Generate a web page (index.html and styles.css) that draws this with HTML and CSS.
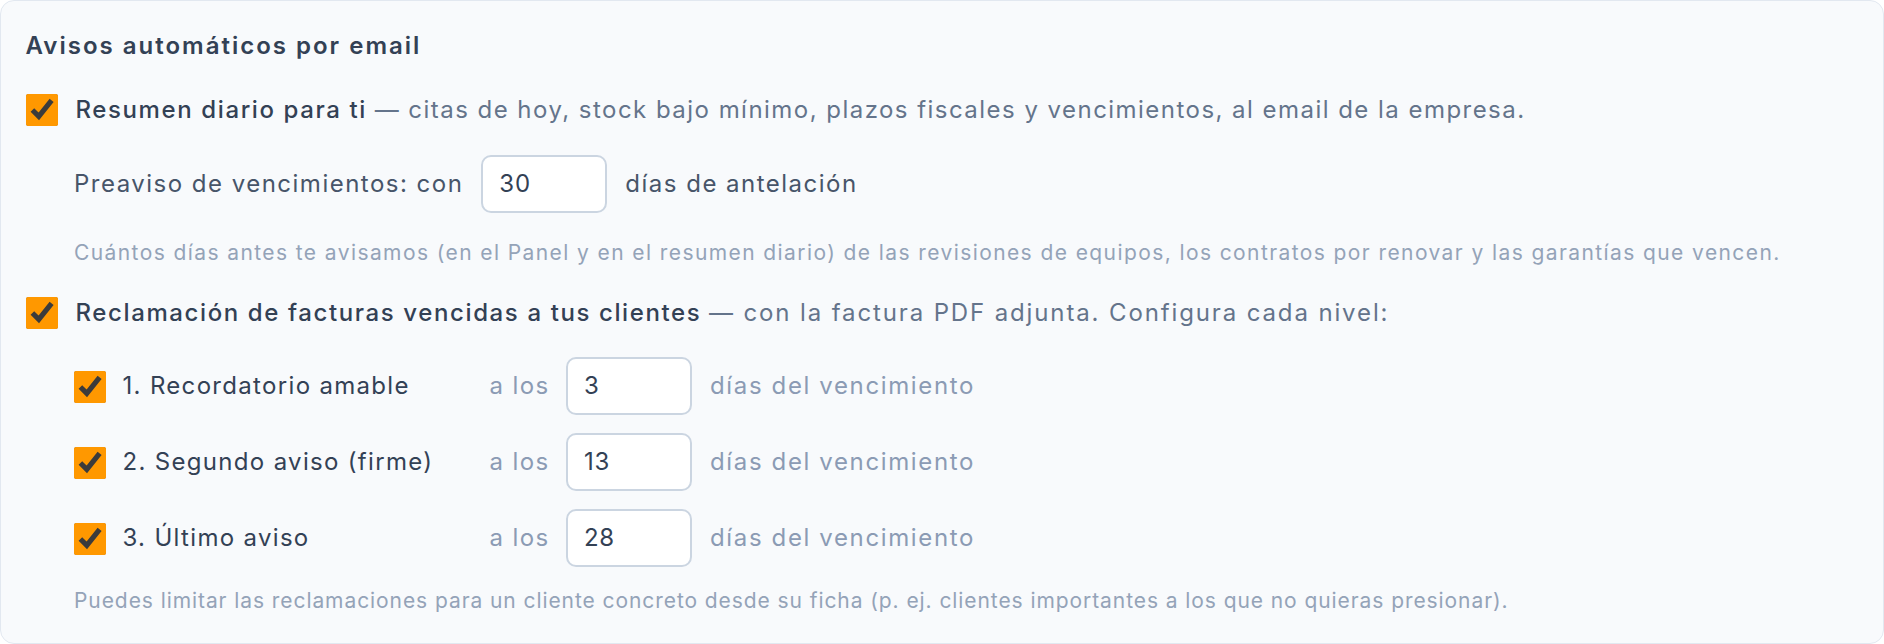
FILE: index.html
```html
<!DOCTYPE html>
<html lang="es">
<head>
<meta charset="utf-8">
<title>Avisos automáticos por email</title>
<link rel="stylesheet" href="styles.css">
</head>
<body>
<section class="card">
  <h2 class="title">Avisos automáticos por email</h2>

  <label class="check-row">
    <input type="checkbox" class="cb" checked>
    <span class="row-text"><span class="strong">Resumen diario para ti</span> <span class="desc">— citas de hoy, stock bajo mínimo, plazos fiscales y vencimientos, al email de la empresa.</span></span>
  </label>

  <div class="field-row">
    <span class="field-label">Preaviso de vencimientos: con</span>
    <input type="text" class="num" value="30">
    <span class="field-label">días de antelación</span>
  </div>

  <p class="help">Cuántos días antes te avisamos (en el Panel y en el resumen diario) de las revisiones de equipos, los contratos por renovar y las garantías que vencen.</p>

  <label class="check-row second">
    <input type="checkbox" class="cb" checked>
    <span class="row-text"><span class="strong">Reclamación de facturas vencidas a tus clientes</span> <span class="desc wide">— con la factura PDF adjunta. Configura cada nivel:</span></span>
  </label>

  <div class="levels">
    <div class="level">
      <input type="checkbox" class="cb" checked>
      <span class="level-name">1. Recordatorio amable</span>
      <span class="muted pre">a los</span>
      <input type="text" class="num" value="3">
      <span class="muted">días del vencimiento</span>
    </div>
    <div class="level">
      <input type="checkbox" class="cb" checked>
      <span class="level-name">2. Segundo aviso (firme)</span>
      <span class="muted pre">a los</span>
      <input type="text" class="num" value="13">
      <span class="muted">días del vencimiento</span>
    </div>
    <div class="level">
      <input type="checkbox" class="cb" checked>
      <span class="level-name">3. Último aviso</span>
      <span class="muted pre">a los</span>
      <input type="text" class="num" value="28">
      <span class="muted">días del vencimiento</span>
    </div>
  </div>

  <p class="help foot">Puedes limitar las reclamaciones para un cliente concreto desde su ficha (p. ej. clientes importantes a los que no quieras presionar).</p>
</section>
</body>
</html>
```

FILE: styles.css
```css
* { box-sizing: border-box; }

html, body {
  margin: 0;
  padding: 0;
  background: #ffffff;
}

body {
  font-family: Inter, "Noto Sans", "Liberation Sans", sans-serif;
  color: #334155;
  letter-spacing: 0.058em;
}

.card {
  height: 644px;
  border: 1.5px solid #e2e8f0;
  border-radius: 14px;
  background: #f8fafc;
  padding: 30px 24px 0 24.5px;
}

.title {
  margin: 0;
  font-size: 24px;
  line-height: 30px;
  font-weight: 600;
  letter-spacing: 2px;
  color: #334155;
}

.check-row {
  display: flex;
  align-items: center;
  gap: 18px;
  margin-top: 32.5px;
  font-size: 24px;
  line-height: 32px;
}

.check-row.second {
  margin-top: 29.7px;
}

.cb {
  width: 32px;
  height: 32px;
  margin: 0;
  flex: none;
  accent-color: #ff9800;
}

.strong {
  font-weight: 500;
  letter-spacing: 0.067em;
  color: #334155;
}

.desc {
  color: #64748b;
  letter-spacing: 0.061em;
}

.desc.wide {
  letter-spacing: 0.078em;
}

.field-row {
  display: flex;
  align-items: center;
  gap: 18px;
  margin: 29px 0 0 48.5px;
  font-size: 24px;
  line-height: 32px;
}

.field-label {
  color: #475569;
  letter-spacing: 0.062em;
  white-space: nowrap;
}

.num {
  width: 126px;
  height: 58px;
  border: 2px solid #cbd5e1;
  border-radius: 10px;
  background: #ffffff;
  padding: 0 16px;
  font-family: inherit;
  font-size: 24px;
  letter-spacing: 0.03em;
  color: #334155;
  outline: none;
  flex: none;
}

.help {
  margin: 26.8px 0 0 48.5px;
  font-size: 21px;
  line-height: 28px;
  letter-spacing: 0.067em;
  color: #94a3b8;
  white-space: nowrap;
}

.levels {
  display: flex;
  flex-direction: column;
  gap: 18px;
  margin: 27.7px 0 0 48.5px;
}

.level {
  display: flex;
  align-items: center;
  font-size: 24px;
  line-height: 32px;
}

.level .cb {
  margin-top: 3px;
}

.level-name {
  width: 367px;
  margin-left: 16.5px;
  color: #334155;
  letter-spacing: 0.055em;
  white-space: nowrap;
}

.muted {
  color: #8b9bb4;
  letter-spacing: 0.068em;
  white-space: nowrap;
}

.muted.pre {
  width: 58.5px;
  margin-right: 18px;
  letter-spacing: 0.058em;
}

.level .num {
  margin-right: 18px;
}

.help.foot {
  margin-top: 20.6px;
  letter-spacing: 0.044em;
}
```
